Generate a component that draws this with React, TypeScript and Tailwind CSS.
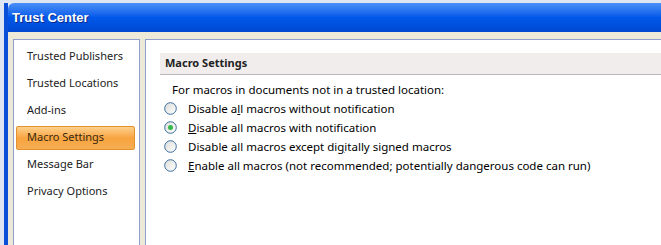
import React from "react";

const navItems = [
  "Trusted Publishers",
  "Trusted Locations",
  "Add-ins",
  "Macro Settings",
  "Message Bar",
  "Privacy Options",
];

type Opt = { before: string; key: string; after: string; checked?: boolean };

const options: Opt[] = [
  { before: "Disable a", key: "l", after: "l macros without notification" },
  { before: "", key: "D", after: "isable all macros with notification", checked: true },
  { before: "Disable all macros except di", key: "g", after: "itally signed macros" },
  { before: "", key: "E", after: "nable all macros (not recommended; potentially dangerous code can run)" },
];

function Radio({ checked }: { checked?: boolean }) {
  return (
    <svg width="13" height="13" viewBox="0 0 13 13" className="shrink-0">
      <defs>
        <linearGradient id="rg" x1="0" y1="0" x2="1" y2="1">
          <stop offset="0" stopColor="#dcdcd7" />
          <stop offset="1" stopColor="#ffffff" />
        </linearGradient>
      </defs>
      <circle cx="6.5" cy="6.5" r="5.8" fill="url(#rg)" stroke="#3b6d9e" strokeWidth="1" />
      {checked && <circle cx="6.5" cy="6.5" r="2.5" fill="#34b84a" />}
    </svg>
  );
}

export default function App() {
  return (
    <div
      className="w-[661px] h-[245px] overflow-hidden bg-[#dfe6f3] pt-[3px] pl-[4px]"
      style={{ fontFamily: '"Noto Sans", "Open Sans", sans-serif' }}
    >
      <div className="flex flex-col h-full border-l-[4px] border-[#0a4fd8]">
        <div className="h-[29px] flex items-center pl-[4px] bg-gradient-to-b from-[#4a90f8] via-[#0058ea] to-[#0048d0] rounded-tl-[6px]">
          <span
            className="text-white font-bold text-[13px]"
            style={{ fontFamily: '"Liberation Sans", sans-serif', textShadow: "1px 1px 0 #0a2a8a" }}
          >
            Trust Center
          </span>
        </div>
        <div className="flex-1 flex bg-[#ece9d8] pt-[7px] pl-[5px] gap-[5px]">
          <div className="w-[127px] bg-white border border-[#8e9fcb] border-b-0 pt-[3px] px-[2px] flex flex-col">
            {navItems.map((n) => (
              <div key={n} className="h-[27px] flex items-center">
                {n === "Macro Settings" ? (
                  <div className="w-[119px] h-[24px] flex items-center pl-[10px] rounded-[2px] border border-[#e3922e] bg-gradient-to-b from-[#fdd08a] via-[#f8a440] to-[#f6ad52] text-[11px] text-[#3a2a10]">
                    {n}
                  </div>
                ) : (
                  <span className="pl-[11px] text-[11px] text-[#222]">{n}</span>
                )}
              </div>
            ))}
          </div>
          <div className="flex-1 bg-white border border-[#8e9fcb] border-r-0 border-b-0 pt-[13px] pl-[14px]">
            <div className="h-[22px] bg-[#f1eded] border-b border-[#b9b9b9] flex items-center pl-[5px]">
              <span className="font-bold text-[11px] text-[#222]">Macro Settings</span>
            </div>
            <div className="pt-[5px] text-[11.5px] text-black">
              <div className="h-[19px] flex items-center pl-[12px]">
                For macros in documents not in a trusted location:
              </div>
              {options.map((o, i) => (
                <div key={i} className="h-[19px] flex items-center gap-[11px] pl-[4px]">
                  <Radio checked={o.checked} />
                  <span>
                    {o.before}
                    <span className="underline">{o.key}</span>
                    {o.after}
                  </span>
                </div>
              ))}
            </div>
          </div>
        </div>
      </div>
    </div>
  );
}
